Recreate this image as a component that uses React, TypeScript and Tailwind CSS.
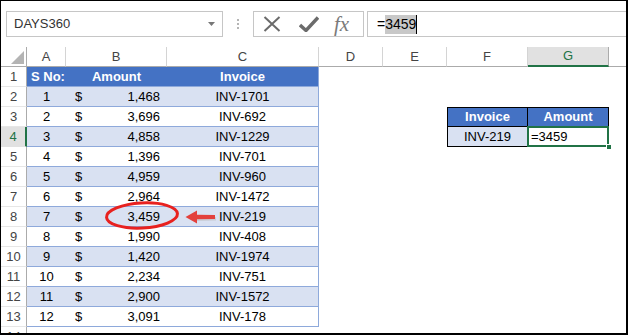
import React from "react";

const data: [number, string, string][] = [
  [1, "1,468", "INV-1701"],
  [2, "3,696", "INV-692"],
  [3, "4,858", "INV-1229"],
  [4, "1,396", "INV-701"],
  [5, "4,959", "INV-960"],
  [6, "2,964", "INV-1472"],
  [7, "3,459", "INV-219"],
  [8, "1,990", "INV-408"],
  [9, "1,420", "INV-1974"],
  [10, "2,234", "INV-751"],
  [11, "2,900", "INV-1572"],
  [12, "3,091", "INV-178"],
];

const letters = ["A", "B", "C", "D", "E", "F", "G"];

function RowHead({ n }: { n: number }) {
  const active = n === 4;
  return (
    <div
      className={
        active
          ? "h-[20px] flex items-center justify-center bg-[#e1e1e1] text-[#217346] border-r-2 border-r-[#217346] border-b border-b-[#e1e1e1] text-[13px]"
          : "h-[20px] flex items-center justify-center bg-white text-[#444444] border-r border-r-[#ababab] border-b border-b-[#e6e6e6] text-[13px]"
      }
    >
      {n}
    </div>
  );
}

function Empty() {
  return <div className="h-[20px]" />;
}

export default function App() {
  const rows: React.ReactNode[] = [];
  for (let n = 1; n <= 14; n++) {
    const cells: React.ReactNode[] = [];
    cells.push(<RowHead key="h" n={n} />);
    if (n === 1) {
      cells.push(
        <div key="a" className="h-[20px] bg-[#4472c4] border-b border-b-[#8ea9db] flex items-center pl-[4px] text-white font-bold">S No:</div>,
        <div key="b" className="h-[20px] bg-[#4472c4] border-b border-b-[#8ea9db] flex items-center justify-center text-white font-bold">Amount</div>,
        <div key="c" className="h-[20px] bg-[#4472c4] border-b border-b-[#8ea9db] border-r border-r-[#8ea9db] flex items-center justify-center text-white font-bold">Invoice</div>
      );
    } else if (n <= 13) {
      const d = data[n - 2];
      const bg = n % 2 === 0 ? "bg-[#d9e1f2]" : "bg-white";
      cells.push(
        <div key="a" className={`h-[20px] ${bg} border-b border-b-[#8ea9db] flex items-center justify-center`}>{d[0]}</div>,
        <div key="b" className={`h-[20px] ${bg} border-b border-b-[#8ea9db] flex items-center justify-between pl-[9px] pr-[7px]`}>
          <span>$</span>
          <span>{d[1]}</span>
        </div>,
        <div key="c" className={`h-[20px] ${bg} border-b border-b-[#8ea9db] border-r border-r-[#8ea9db] flex items-center justify-center`}>{d[2]}</div>
      );
    } else {
      cells.push(<Empty key="a" />, <Empty key="b" />, <Empty key="c" />);
    }
    cells.push(<Empty key="d" />, <Empty key="e" />);
    if (n === 3) {
      cells.push(
        <div key="f" className="h-[20px] bg-[#4472c4] border border-black flex items-center justify-center text-white font-bold">Invoice</div>,
        <div key="g" className="h-[20px] bg-[#4472c4] border-y border-r border-black flex items-center justify-center text-white font-bold">Amount</div>
      );
    } else if (n === 4) {
      cells.push(
        <div key="f" className="h-[20px] bg-[#d9e1f2] border-x border-b border-black flex items-center justify-center">INV-219</div>,
        <div key="g" className="relative h-[20px] bg-white border-r border-b border-black flex items-center pl-[3px]">
          =3459
          <div className="absolute left-[-1px] top-[-1px] right-[-1px] bottom-[-1px] border-2 border-[#217346]" />
          <div className="absolute right-[-4px] bottom-[-4px] w-[6px] h-[6px] bg-[#217346] border border-white" />
        </div>
      );
    } else {
      cells.push(<Empty key="f" />, <Empty key="g" />);
    }
    cells.push(<Empty key="h2" />);
    rows.push(<React.Fragment key={n}>{cells}</React.Fragment>);
  }

  return (
    <div
      className="relative w-[628px] h-[335px] overflow-hidden bg-white border-t border-l border-r-2 border-b-2 border-black text-black text-[13px]"
      style={{ fontFamily: '"Liberation Sans", Arial, sans-serif' }}
    >
      {/* Formula bar */}
      <div className="h-[46px] flex items-start pt-[10px]">
        <div className="ml-[5px] w-[217px] h-[26px] border border-[#c6c6c6] flex items-center justify-between pl-[7px] pr-[7px] text-[#333333] text-[13px]">
          <span>DAYS360</span>
          <svg width="7" height="4" viewBox="0 0 7 4">
            <path d="M0 0 L7 0 L3.5 4 Z" fill="#777777" />
          </svg>
        </div>
        <div className="w-[30px] h-[26px] flex flex-col items-center justify-center gap-[2px]">
          <div className="w-[2px] h-[2px] bg-[#b5b5b5]" />
          <div className="w-[2px] h-[2px] bg-[#b5b5b5]" />
          <div className="w-[2px] h-[2px] bg-[#b5b5b5]" />
        </div>
        <div className="w-[111px] h-[26px] border border-[#c6c6c6] flex items-center">
          <svg className="ml-[9px]" width="18" height="16" viewBox="0 0 18 16">
            <path d="M1.5 1 L16.5 15 M16.5 1 L1.5 15" stroke="#6b6b6b" strokeWidth="2" fill="none" />
          </svg>
          <svg className="ml-[18px]" width="20" height="16" viewBox="0 0 20 16">
            <path d="M1 9 L7 14.5 L19 1.5" stroke="#6b6b6b" strokeWidth="3.4" fill="none" strokeLinejoin="miter" />
          </svg>
          <span
            className="ml-[15px] text-[21px] italic text-[#7a7a7a] leading-none"
            style={{ fontFamily: '"Liberation Serif", "Times New Roman", serif' }}
          >
            fx
          </span>
        </div>
        <div className="ml-[3px] flex-1 h-[26px] border-y border-l border-[#c6c6c6] flex items-center pl-[9px] text-[14px]">
          <span>=</span>
          <span className="bg-[#c8c8c8] leading-[19px] h-[19px]">3459</span>
          <span className="w-[1px] h-[19px] bg-black" />
        </div>
      </div>

      {/* Sheet grid */}
      <div className="grid grid-cols-[26px_39px_101px_152px_64px_64px_81px_81px_1fr]">
        <div className="h-[20px] border-r border-r-[#ababab] border-b border-b-[#ababab] flex items-end justify-end pr-[2px] pb-[2px]">
          <svg width="13" height="13" viewBox="0 0 13 13">
            <path d="M13 0 L13 13 L0 13 Z" fill="#b4b4b4" />
          </svg>
        </div>
        {letters.map((l) =>
          l === "G" ? (
            <div
              key={l}
              className="h-[20px] bg-[#e1e1e1] border-b-2 border-b-[#217346] border-r border-r-[#ababab] flex items-center justify-center text-[#217346] text-[13px]"
            >
              {l}
            </div>
          ) : (
            <div
              key={l}
              className="h-[20px] border-b border-b-[#ababab] border-r border-r-[#d4d4d4] flex items-center justify-center text-[#444444] text-[13px]"
            >
              {l}
            </div>
          )
        )}
        <div className="h-[20px] border-b border-b-[#ababab]" />
        {rows}
      </div>

      {/* annotation */}
      <svg
        className="absolute left-[-1px] top-[-1px] pointer-events-none"
        width="628"
        height="335"
        viewBox="0 0 628 335"
      >
        <ellipse cx="142" cy="215.5" rx="35.5" ry="12.5" fill="none" stroke="#e8211f" strokeWidth="3" transform="rotate(-3 142 215.5)" />
        <path d="M195 215 L215 215.5 L215 219 L195 219.5 Z" fill="#b9b9b9" opacity="0.5" transform="translate(1 1.5)" />
        <path d="M185.5 217 L197 210.5 L197 214.8 L215 215 L215 219 L197 219.2 L197 223.5 Z" fill="#e3403c" />
      </svg>
    </div>
  );
}
